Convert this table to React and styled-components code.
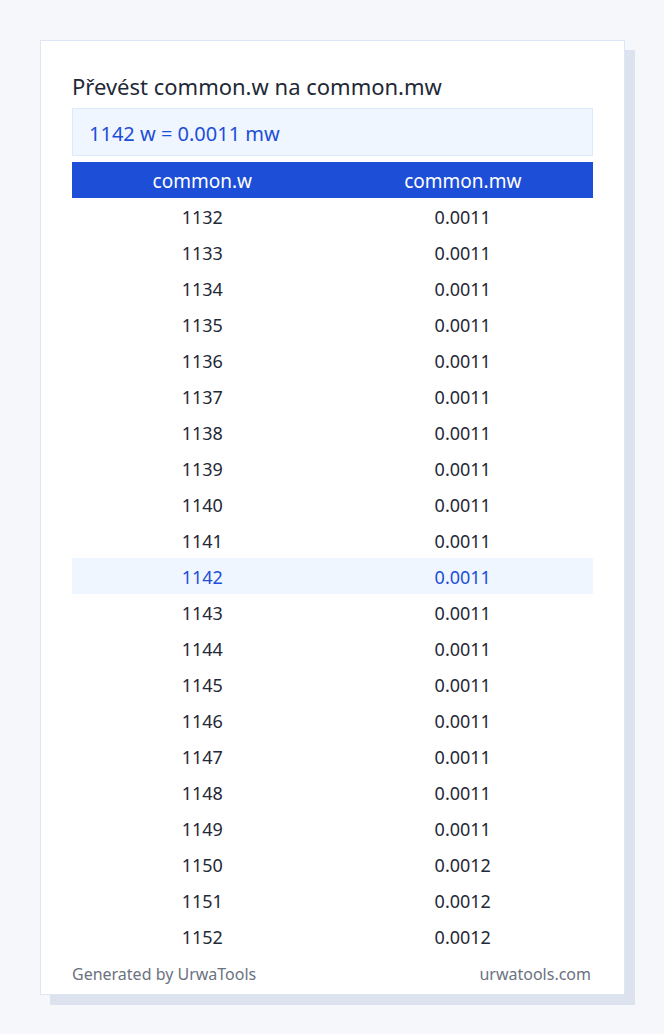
import React from 'react';
import styled, { createGlobalStyle } from 'styled-components';

const GlobalStyle = createGlobalStyle`
  html, body {
    margin: 0;
    padding: 0;
    background: #f5f7fb;
    font-family: 'Noto Sans', 'Open Sans', sans-serif;
  }
`;

const Page = styled.div`
  padding: 40px 0 0 40px;
  min-height: 1034px;
  box-sizing: border-box;
`;

const Card = styled.div`
  width: 585px;
  box-sizing: border-box;
  background: #fff;
  border: 1px solid #dde6f5;
  box-shadow: 10px 10px 0 #dce3ef;
  padding: 31px 31px 9px 31px;
`;

const Title = styled.h1`
  margin: 0 0 7px;
  font-size: 22px;
  line-height: 29px;
  font-weight: 400;
  color: #1f2937;
`;

const Result = styled.div`
  height: 48px;
  box-sizing: border-box;
  display: flex;
  align-items: center;
  padding: 2px 16px 0;
  background: #eff6ff;
  border: 1px solid #dbeafe;
  color: #1d4ed8;
  font-size: 20px;
  margin-bottom: 6px;
`;

const Table = styled.div`
  display: flex;
  flex-direction: column;
`;

const Row = styled.div`
  display: grid;
  grid-template-columns: 1fr 1fr;
  height: 36px;
  box-sizing: border-box;
  padding-top: 2px;
  align-items: center;
  text-align: center;
  font-size: ${(p) => (p.$head ? '19px' : '18px')};
  background: ${(p) => (p.$head ? '#1d4ed8' : p.$active ? '#eff6ff' : 'transparent')};
  color: ${(p) => (p.$head ? '#ffffff' : p.$active ? '#1d4ed8' : '#1f2937')};
`;

const Footer = styled.div`
  display: flex;
  justify-content: space-between;
  padding: 0 2px 0 0;
  margin-top: 9px;
  font-size: 16px;
  line-height: 22px;
  color: #6b7280;
`;

const rows = Array.from({ length: 21 }, (_, i) => {
  const w = 1132 + i;
  return { w, mw: w >= 1150 ? '0.0012' : '0.0011' };
});

export default function App() {
  return (
    <Page>
      <GlobalStyle />
      <Card>
        <Title>Převést common.w na common.mw</Title>
        <Result>1142 w = 0.0011 mw</Result>
        <Table>
          <Row $head>
            <span>common.w</span>
            <span>common.mw</span>
          </Row>
          {rows.map((r) => (
            <Row key={r.w} $active={r.w === 1142}>
              <span>{r.w}</span>
              <span>{r.mw}</span>
            </Row>
          ))}
        </Table>
        <Footer>
          <span>Generated by UrwaTools</span>
          <span>urwatools.com</span>
        </Footer>
      </Card>
    </Page>
  );
}
